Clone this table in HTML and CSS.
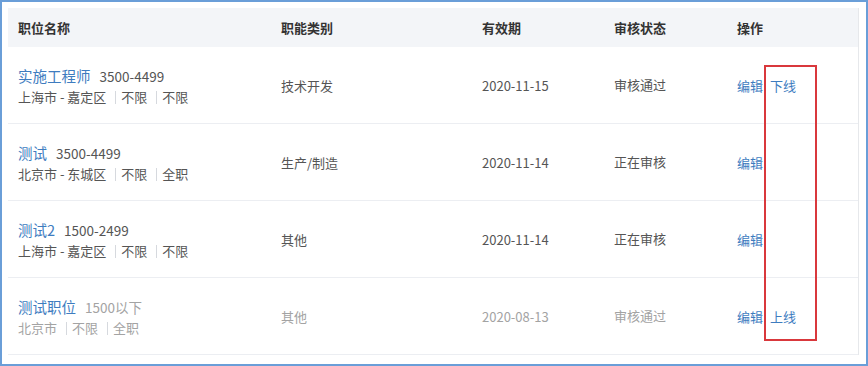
FILE: index.html
```html
<!DOCTYPE html>
<html lang="zh-CN">
<head>
<meta charset="utf-8">
<title>职位列表</title>
<link rel="stylesheet" href="styles.css">
</head>
<body>
<div class="frame">
  <div class="table">
    <div class="row head">
      <div class="cell first">职位名称</div>
      <div class="cell">职能类别</div>
      <div class="cell">有效期</div>
      <div class="cell">审核状态</div>
      <div class="cell">操作</div>
    </div>
    <div class="row">
      <div class="cell first">
        <div class="title"><a class="name">实施工程师</a><span class="salary">3500-4499</span></div>
        <div class="sub">上海市 - 嘉定区<i class="sep"></i>不限<i class="sep"></i>不限</div>
      </div>
      <div class="cell">技术开发</div>
      <div class="cell">2020-11-15</div>
      <div class="cell status">审核通过</div>
      <div class="cell ops"><a>编辑</a><a>下线</a></div>
    </div>
    <div class="row">
      <div class="cell first">
        <div class="title"><a class="name">测试</a><span class="salary">3500-4499</span></div>
        <div class="sub">北京市 - 东城区<i class="sep"></i>不限<i class="sep"></i>全职</div>
      </div>
      <div class="cell">生产/制造</div>
      <div class="cell">2020-11-14</div>
      <div class="cell status">正在审核</div>
      <div class="cell ops"><a>编辑</a></div>
    </div>
    <div class="row">
      <div class="cell first">
        <div class="title"><a class="name">测试2</a><span class="salary">1500-2499</span></div>
        <div class="sub">上海市 - 嘉定区<i class="sep"></i>不限<i class="sep"></i>不限</div>
      </div>
      <div class="cell">其他</div>
      <div class="cell">2020-11-14</div>
      <div class="cell status">正在审核</div>
      <div class="cell ops"><a>编辑</a></div>
    </div>
    <div class="row off">
      <div class="cell first">
        <div class="title"><a class="name">测试职位</a><span class="salary">1500以下</span></div>
        <div class="sub">北京市<i class="sep"></i>不限<i class="sep"></i>全职</div>
      </div>
      <div class="cell">其他</div>
      <div class="cell">2020-08-13</div>
      <div class="cell status">审核通过</div>
      <div class="cell ops"><a>编辑</a><a>上线</a></div>
    </div>
  </div>
  <div class="highlight"></div>
</div>
</body>
</html>
```

FILE: styles.css
```css
* { box-sizing: border-box; }
html, body { margin: 0; padding: 0; background: #fff; }
body {
  font-family: "Noto Sans CJK SC", "Noto Sans", sans-serif;
  font-size: 13px;
  color: #555;
}
.frame {
  position: relative;
  width: 868px;
  height: 366px;
  border: 2px solid #6a9ed8;
  padding: 6px 7px 0 6px;
  overflow: hidden;
}
.table {
  border-right: 1px solid #e6e8eb;
}
.row {
  display: grid;
  grid-template-columns: 263px 201px 132px 123px 1fr;
  height: 77px;
  border-bottom: 1px solid #eceef2;
  align-items: center;
}
.row.head {
  height: 39px;
  background: #f3f5f8;
  border-bottom: none;
  font-weight: 700;
  color: #333;
}
.cell {
  padding-left: 10px;
  white-space: nowrap;
}
.row:not(.head) .cell { padding-top: 1px; }
.title {
  line-height: 21px;
  height: 21px;
}
.name {
  color: #3e7cbf;
  font-size: 14.5px;
}
.salary {
  margin-left: 9px;
  font-size: 13.5px;
  color: #555;
}
.sub {
  line-height: 21px;
  height: 21px;
  color: #555;
}
.sep {
  display: inline-block;
  width: 1px;
  height: 13px;
  background: #d6d9de;
  margin: 0 5px 0 9px;
  vertical-align: -2px;
}
.status { padding-top: 0; margin-top: -3px; }
.ops a {
  color: #3e7cbf;
  margin-right: 7px;
}
.row.off .sub,
.row.off .salary,
.row.off .cell:not(.first):not(.ops) {
  color: #a3a3a3;
}
.highlight {
  position: absolute;
  left: 762px;
  top: 63px;
  width: 53px;
  height: 276px;
  border: 2px solid #d9383c;
}
```
